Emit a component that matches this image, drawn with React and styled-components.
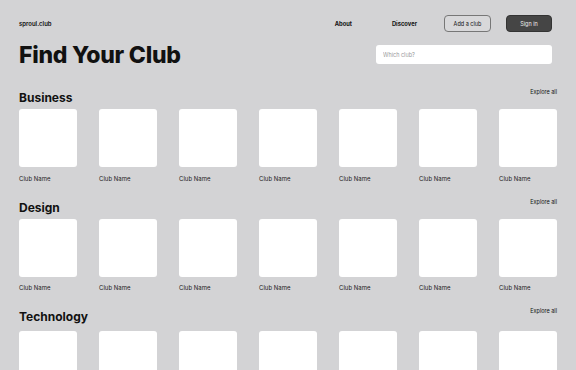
import React from "react";
import styled, { createGlobalStyle } from "styled-components";

const Global = createGlobalStyle`
  html, body { margin: 0; padding: 0; background: #d3d3d5; }
  body { font-family: Inter, "Liberation Sans", Arial, sans-serif; color: #111; }
  * { box-sizing: border-box; }
`;

const Page = styled.div`
  width: 576px;
  height: 370px;
  overflow: hidden;
  padding: 0 19px;
`;

const Header = styled.header`
  display: flex;
  align-items: center;
  height: 17px;
  margin-top: 15px;
  padding-right: 5px;
`;

const Logo = styled.div`
  font-size: 6px;
  font-weight: 600;
  flex: 1;
`;

const NavLink = styled.a`
  font-size: 5.8px;
  font-weight: 700;
  color: #111;
  margin-right: ${(p) => p.$gap}px;
`;

const Button = styled.button`
  height: 17px;
  width: ${(p) => p.$w}px;
  border-radius: 4px;
  font-family: inherit;
  font-size: 5.5px;
  padding: 0;
  border: 1px solid ${(p) => (p.$dark ? "#333" : "#777")};
  background: ${(p) => (p.$dark ? "#454545" : "#d8d8da")};
  color: ${(p) => (p.$dark ? "#eee" : "#111")};
  margin-left: ${(p) => p.$ml}px;
`;

const Hero = styled.div`
  display: flex;
  justify-content: space-between;
  align-items: flex-start;
  margin-top: 9px;
  padding-right: 5px;
`;

const Title = styled.h1`
  margin: 0;
  font-size: 23px;
  line-height: 28px;
  font-weight: 800;
  letter-spacing: -0.25px;
`;

const Search = styled.input`
  margin-top: 4px;
  width: 176px;
  height: 19px;
  border: none;
  border-radius: 3px;
  background: #fff;
  font-family: inherit;
  font-size: 5.5px;
  padding: 0 7px;
  outline: none;
  &::placeholder { color: #999; }
`;

const Section = styled.section`
  margin-top: ${(p) => p.$mt}px;
`;

const SectionHead = styled.div`
  display: flex;
  justify-content: space-between;
  align-items: flex-start;
`;

const SectionTitle = styled.h2`
  margin: 0;
  font-size: 12px;
  line-height: 14px;
  font-weight: 700;
`;

const Explore = styled.a`
  font-size: 5.5px;
  line-height: 8px;
  margin-top: -3px;
  color: #111;
`;

const Grid = styled.div`
  display: flex;
  justify-content: space-between;
  margin-top: ${(p) => p.$mt}px;
`;

const Item = styled.div`
  width: 58px;
`;

const Card = styled.div`
  width: 58px;
  height: 58px;
  border-radius: 3px;
  background: #fff;
`;

const Name = styled.div`
  font-size: 6px;
  line-height: 7px;
  margin-top: 7.5px;
  color: #222;
`;

const sections = ["Business", "Design", "Technology"];

export default function App() {
  return (
    <Page>
      <Global />
      <Header>
        <Logo>sproul.club</Logo>
        <NavLink $gap={40}>About</NavLink>
        <NavLink $gap={27}>Discover</NavLink>
        <Button $w={47} $ml={0}>Add a club</Button>
        <Button $w={46} $ml={15} $dark>Sign in</Button>
      </Header>
      <Hero>
        <Title>Find Your Club</Title>
        <Search placeholder="Which club?" />
      </Hero>
      {sections.map((s, i) => (
        <Section key={s} $mt={i === 0 ? 22 : 19}>
          <SectionHead>
            <SectionTitle>{s}</SectionTitle>
            <Explore>Explore all</Explore>
          </SectionHead>
          <Grid $mt={i === 2 ? 7 : 4}>
            {Array.from({ length: 7 }).map((_, j) => (
              <Item key={j}>
                <Card />
                <Name>Club Name</Name>
              </Item>
            ))}
          </Grid>
        </Section>
      ))}
    </Page>
  );
}
